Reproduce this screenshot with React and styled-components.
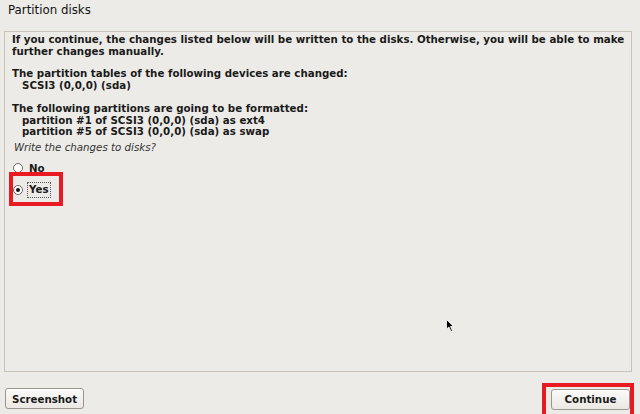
import React from "react";
import styled, { createGlobalStyle } from "styled-components";

const Global = createGlobalStyle`
  html, body { margin: 0; padding: 0; background: #edebe7; }
  body { font-family: "DejaVu Sans", "Liberation Sans", sans-serif; }
  #root { width: 640px; height: 414px; }
`;

const Screen = styled.div`
  width: 640px;
  height: 414px;
  display: flex;
  flex-direction: column;
  background: #edebe7;
  color: #1a1a1a;
  position: relative;
  overflow: hidden;
`;

const Title = styled.div`
  font-size: 11.8px;
  padding: 3px 8px 0 8px;
  height: 31px;
  box-sizing: border-box;
  color: #111;
`;

const Panel = styled.div`
  margin: 0 8px 0 4px;
  height: 341px;
  box-sizing: border-box;
  border: 1px solid #c9c2b7;
  padding: 2px 2px 2px 7px;
  font-size: 10.25px;
  font-weight: bold;
  line-height: 11.7px;
`;

const Para = styled.p`
  margin: 0 0 11px 0;
`;

const Indent = styled.div`
  padding-left: 10px;
`;

const Question = styled.div`
  font-weight: normal;
  font-style: italic;
  margin: -7px 0 0 2px;
  color: #333;
`;

const Options = styled.div`
  display: flex;
  flex-direction: column;
  gap: 6px;
  margin-top: 7px;
`;

const Option = styled.label`
  display: flex;
  align-items: center;
  gap: 4px;
  position: relative;
  width: fit-content;
  margin-left: 1px;
`;

const Radio = styled.span`
  width: 8px;
  height: 8px;
  border-radius: 50%;
  border: 1px solid #6e6a64;
  background: #fff;
  display: flex;
  align-items: center;
  justify-content: center;
  &::after {
    content: "";
    width: 4px;
    height: 4px;
    border-radius: 50%;
    background: ${(p) => (p.$checked ? "#111" : "transparent")};
  }
`;

const OptText = styled.span`
  padding: 1px 1px;
  border: 1px dotted ${(p) => (p.$focus ? "#555" : "transparent")};
`;

const Highlight = styled.span`
  position: absolute;
  left: -4px;
  top: -10px;
  width: 54px;
  height: 34px;
  box-sizing: border-box;
  border: 4px solid #ea1a22;
`;

const Footer = styled.div`
  display: flex;
  justify-content: space-between;
  align-items: center;
  padding: 16px 10px 0 5px;
`;

const ButtonWrap = styled.div`
  position: relative;
`;

const Button = styled.button`
  font-family: inherit;
  font-size: 10.25px;
  font-weight: bold;
  color: #1a1a1a;
  height: 21px;
  min-width: 79px;
  padding: 0 6px;
  border: 1px solid #9c968d;
  border-radius: 3px;
  background: linear-gradient(#fbfaf9, #ebe8e3);
  box-shadow: inset 0 1px 0 #fff;
`;

const RedFrame = styled.span`
  position: absolute;
  left: -9px;
  top: -5px;
  right: -4px;
  bottom: -8px;
  border: 4px solid #ea1a22;
  pointer-events: none;
`;

const Cursor = styled.svg`
  position: absolute;
  left: 446px;
  top: 319px;
`;

export default function App() {
  return (
    <>
      <Global />
      <Screen>
        <Title>Partition disks</Title>
        <Panel>
          <Para>
            If you continue, the changes listed below will be written to the disks. Otherwise, you will be able to make
            further changes manually.
          </Para>
          <Para>
            The partition tables of the following devices are changed:
            <Indent>SCSI3 (0,0,0) (sda)</Indent>
          </Para>
          <Para>
            The following partitions are going to be formatted:
            <Indent>partition #1 of SCSI3 (0,0,0) (sda) as ext4</Indent>
            <Indent>partition #5 of SCSI3 (0,0,0) (sda) as swap</Indent>
          </Para>
          <Question>Write the changes to disks?</Question>
          <Options>
            <Option>
              <Radio />
              <OptText>No</OptText>
            </Option>
            <Option>
              <Radio $checked />
              <OptText $focus>Yes</OptText>
              <Highlight />
            </Option>
          </Options>
        </Panel>
        <Footer>
          <Button>Screenshot</Button>
          <ButtonWrap>
            <Button>Continue</Button>
            <RedFrame />
          </ButtonWrap>
        </Footer>
        <Cursor width="10" height="14" viewBox="0 0 10 14">
          <path d="M0.5 0.5 L0.5 10 L3 8 L5 12.5 L6.5 11.8 L4.5 7.5 L7.5 7.5 Z" fill="#000" stroke="#fff" strokeWidth="0.8" />
        </Cursor>
      </Screen>
    </>
  );
}
